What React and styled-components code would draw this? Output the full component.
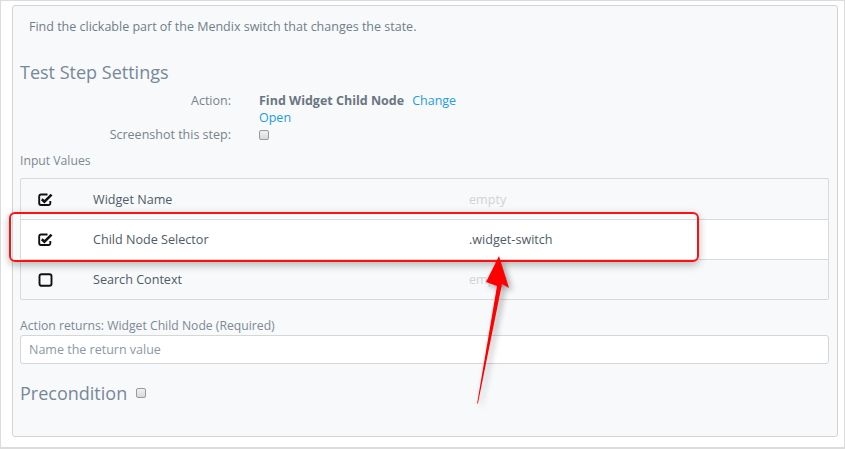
import React from 'react'
import styled, { createGlobalStyle } from 'styled-components'

const GlobalStyle = createGlobalStyle`
  html, body {
    margin: 0;
    padding: 0;
    background: #ffffff;
  }
  body {
    font-family: "Open Sans", "Liberation Sans", sans-serif;
  }
`

const Frame = styled.div`
  box-sizing: border-box;
  width: 845px;
  height: 449px;
  border: 1px solid #dcdcdc;
  border-bottom-width: 2px;
  padding: 4px 6px 10px 11px;
`

const Panel = styled.div`
  position: relative;
  box-sizing: border-box;
  height: 432px;
  border: 1px solid #d3d3d3;
  border-radius: 3px;
  background: #f8f9fa;
  padding: 12px 8px 0 7px;
`

const Description = styled.p`
  margin: 0 0 0 9px;
  font-size: 12.5px;
  line-height: 18px;
  color: #6f7e8c;
`

const Heading = styled.h3`
  margin: ${(p) => p.$top || 0}px 0 0;
  font-size: 18px;
  line-height: 24px;
  font-weight: 400;
  color: #76889a;
  display: flex;
  align-items: center;
  gap: 9px;
`

const Form = styled.div`
  margin-top: 8px;
  display: grid;
  grid-template-columns: 211px auto;
  column-gap: 28px;
  font-size: 12.5px;
  line-height: 17px;
`

const Label = styled.span`
  text-align: right;
  color: #76838f;
`

const Value = styled.span`
  display: flex;
  align-items: center;
  gap: 8px;
  color: #6b7784;
`

const Strong = styled.b`
  font-weight: 700;
  color: #6a7683;
`

const Link = styled.a`
  color: #1c9ddf;
  text-decoration: none;
`

const Box = styled.span`
  display: inline-block;
  box-sizing: border-box;
  width: 10px;
  height: 10px;
  border: 1px solid #9a9a9a;
  border-radius: 2px;
  background: linear-gradient(#f0f0f0, #dadada);
`

const SmallTitle = styled.div`
  margin-top: ${(p) => p.$top}px;
  font-size: 12.2px;
  line-height: 17px;
  color: #7b8996;
`

const Table = styled.div`
  position: relative;
  margin-top: 9px;
  border: 1px solid #d7d9db;
  border-radius: 2px;
`

const Row = styled.div`
  position: relative;
  display: grid;
  grid-template-columns: 72px 376px 1fr;
  align-items: center;
  height: 40px;
  box-sizing: border-box;
  border-top: ${(p) => (p.$first ? 'none' : '1px solid #d7d9db')};
  background: ${(p) => (p.$active ? '#ffffff' : 'transparent')};
  font-size: 12.6px;
  color: #4f5b68;
  z-index: ${(p) => (p.$active ? 1 : 0)};
`

const IconCell = styled.span`
  display: flex;
  justify-content: flex-start;
  padding-left: 17px;
`

const Cell = styled.span`
  color: ${(p) => (p.$muted ? '#d0d3d6' : '#4f5b68')};
`

const Highlight = styled.div`
  position: absolute;
  left: -12px;
  top: 33px;
  width: 690px;
  height: 50px;
  box-sizing: border-box;
  border: 2px solid #ff1010;
  border-radius: 6px;
  box-shadow: 0 3px 8px rgba(0, 0, 0, 0.28);
  z-index: 2;
  pointer-events: none;
`

const Input = styled.input`
  display: block;
  box-sizing: border-box;
  width: 100%;
  height: 29px;
  margin-top: 1px;
  padding: 0 8px;
  border: 1px solid #d4d6d8;
  border-radius: 3px;
  background: #ffffff;
  font-family: inherit;
  font-size: 12.5px;
  color: #555;
  &::placeholder {
    color: #8d98a3;
  }
`

const Arrow = styled.svg`
  position: absolute;
  left: 462px;
  top: 250px;
  z-index: 3;
  overflow: visible;
  filter: drop-shadow(3px 3px 3px rgba(0, 0, 0, 0.35));
`

const Checked = () => (
  <svg width="15" height="13" viewBox="0 0 15 13">
    <path
      d="M9.5 1.5H3a1.8 1.8 0 0 0-1.8 1.8v7A1.8 1.8 0 0 0 3 12h7.5a1.8 1.8 0 0 0 1.8-1.8V8"
      fill="none"
      stroke="#111"
      strokeWidth="1.9"
    />
    <path d="M3.8 6.2 6.4 8.6 13.6 1.6" fill="none" stroke="#111" strokeWidth="2.6" />
  </svg>
)

const Unchecked = () => (
  <svg width="15" height="14" viewBox="0 0 15 14">
    <rect x="1.5" y="1.2" width="12" height="11.6" rx="2" fill="none" stroke="#111" strokeWidth="1.9" />
  </svg>
)

const rows = [
  { name: 'Widget Name', value: 'empty', muted: true, checked: true },
  { name: 'Child Node Selector', value: '.widget-switch', checked: true, active: true },
  { name: 'Search Context', value: 'empty', muted: true, checked: false }
]

const App = () => (
  <>
    <GlobalStyle />
    <Frame>
      <Panel>
        <Description>Find the clickable part of the Mendix switch that changes the state.</Description>
        <Heading $top={24}>Test Step Settings</Heading>
        <Form>
          <Label>Action:</Label>
          <Value>
            <Strong>Find Widget Child Node</Strong>
            <Link href="#">Change</Link>
          </Value>
          <span />
          <Value>
            <Link href="#">Open</Link>
          </Value>
          <Label>Screenshot this step:</Label>
          <Value>
            <Box />
          </Value>
        </Form>
        <SmallTitle $top={9}>Input Values</SmallTitle>
        <Table>
          {rows.map((r, i) => (
            <Row key={r.name} $first={i === 0} $active={r.active}>
              <IconCell>{r.checked ? <Checked /> : <Unchecked />}</IconCell>
              <Cell>{r.name}</Cell>
              <Cell $muted={r.muted}>{r.value}</Cell>
            </Row>
          ))}
          <Highlight />
        </Table>
        <SmallTitle $top={17}>Action returns: Widget Child Node (Required)</SmallTitle>
        <Input placeholder="Name the return value" />
        <Heading $top={17}>
          Precondition <Box />
        </Heading>
        <Arrow width="50" height="160" viewBox="0 0 50 160">
          <polygon points="24,0 34,32 27,28 3,147 2,148 22,30 11,26" fill="#ff0000" />
        </Arrow>
      </Panel>
    </Frame>
  </>
)

export default App
